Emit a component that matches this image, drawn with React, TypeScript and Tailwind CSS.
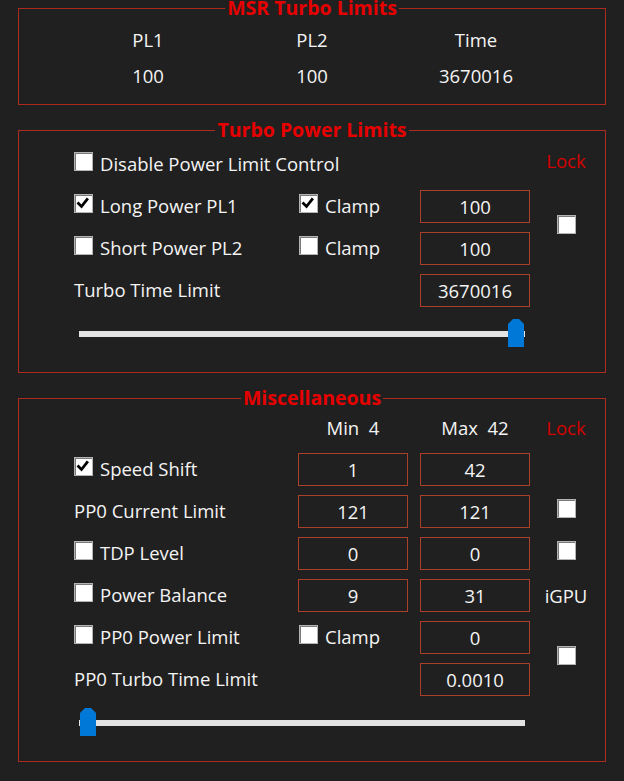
import React from "react";

function Box({ checked = false, className = "" }: { checked?: boolean; className?: string }) {
  return (
    <span
      className={`relative inline-block h-[19px] w-[19px] shrink-0 border border-[#b4b4b4] bg-white shadow-[inset_1px_1px_0_#7a7a7a] ${className}`}
    >
      {checked && (
        <svg viewBox="0 0 19 19" className="absolute left-0 top-0 h-[19px] w-[19px]">
          <path d="M3.5 8.5 L6.5 11.5 L12 4.5" fill="none" stroke="#000" strokeWidth="2.8" strokeLinecap="square" />
        </svg>
      )}
    </span>
  );
}

function Check({ label, checked = false, className = "" }: { label: string; checked?: boolean; className?: string }) {
  return (
    <div className={`flex items-center gap-[7px] ${className}`}>
      <Box checked={checked} className="mb-[6px]" />
      <span className="mb-px whitespace-nowrap">{label}</span>
    </div>
  );
}

function Field({ value }: { value: string }) {
  return (
    <div className="flex items-center justify-center border border-[#a8402c]">{value}</div>
  );
}

function Slider({ at }: { at: "start" | "end" }) {
  return (
    <div className="relative ml-[5px] mt-[12px] h-[28px] w-[446px]">
      <div className="absolute left-0 right-0 top-[12px] h-[6px] bg-[#e3e3e3]" />
      <svg
        viewBox="0 0 16 28"
        className={`absolute top-0 h-[28px] w-[16px] ${at === "end" ? "right-px" : "left-px"}`}
      >
        <path d="M0 5 L5 0 H11 L16 5 V28 H0 Z" fill="#0078d7" />
      </svg>
    </div>
  );
}

function Frame({ title, children, className = "" }: { title: string; children: React.ReactNode; className?: string }) {
  return (
    <fieldset className={`border border-[#ad2a20] ${className}`}>
      <legend className="mx-auto px-[2px] text-[19.5px] font-bold leading-[16px] text-[#e60000]">{title}</legend>
      {children}
    </fieldset>
  );
}

const grid = "grid grid-cols-[212px_110px_110px_1fr] auto-rows-[33px] gap-x-3 gap-y-[9px] pl-[55px] pr-[15px]";

export default function App() {
  return (
    <div className="min-h-screen bg-[#202020] px-[18px] pb-5 font-['Open_Sans',sans-serif] text-[18.5px] leading-[24px] text-[#f4f4f4]">
      <Frame title="MSR Turbo Limits">
        <div className="mx-auto grid w-[492px] grid-cols-3 gap-y-3 pb-4 pt-3 text-center">
          <span>PL1</span>
          <span>PL2</span>
          <span>Time</span>
          <span>100</span>
          <span>100</span>
          <span>3670016</span>
        </div>
      </Frame>

      <Frame title="Turbo Power Limits" className="mt-[17px]">
        <div className="pb-[25px] pt-[10px]">
          <div className={grid}>
            <Check label="Disable Power Limit Control" className="col-span-3" />
            <span className="mb-[7px] self-center text-center text-[#d40000]">Lock</span>

            <Check label="Long Power PL1" checked />
            <Check label="Clamp" checked className="ml-px" />
            <Field value="100" />
            <div className="row-span-2 flex items-center justify-center">
              <Box className="mb-[6px]" />
            </div>

            <Check label="Short Power PL2" />
            <Check label="Clamp" className="ml-px" />
            <Field value="100" />

            <span className="col-span-2 mb-px self-center">Turbo Time Limit</span>
            <Field value="3670016" />
            <span />
          </div>
          <div className="pl-[55px]">
            <Slider at="end" />
          </div>
        </div>
      </Frame>

      <Frame title="Miscellaneous" className="mt-[17px]">
        <div className="pb-[25px] pt-[5px]">
          <div className={grid}>
            <span />
            <span className="self-center whitespace-pre text-center">Min  4</span>
            <span className="self-center whitespace-pre text-center">Max  42</span>
            <span className="self-center text-center text-[#d40000]">Lock</span>

            <Check label="Speed Shift" checked />
            <Field value="1" />
            <Field value="42" />
            <span />

            <span className="mb-px self-center">PP0 Current Limit</span>
            <Field value="121" />
            <Field value="121" />
            <div className="flex items-center justify-center">
              <Box className="mb-[6px]" />
            </div>

            <Check label="TDP Level" />
            <Field value="0" />
            <Field value="0" />
            <div className="flex items-center justify-center">
              <Box className="mb-[6px]" />
            </div>

            <Check label="Power Balance" />
            <Field value="9" />
            <Field value="31" />
            <span className="self-center text-center">iGPU</span>

            <Check label="PP0 Power Limit" />
            <Check label="Clamp" className="ml-px" />
            <Field value="0" />
            <div className="row-span-2 flex items-center justify-center">
              <Box className="mb-[6px]" />
            </div>

            <span className="col-span-2 mb-px self-center">PP0 Turbo Time Limit</span>
            <Field value="0.0010" />
          </div>
          <div className="pl-[55px]">
            <Slider at="start" />
          </div>
        </div>
      </Frame>
    </div>
  );
}
